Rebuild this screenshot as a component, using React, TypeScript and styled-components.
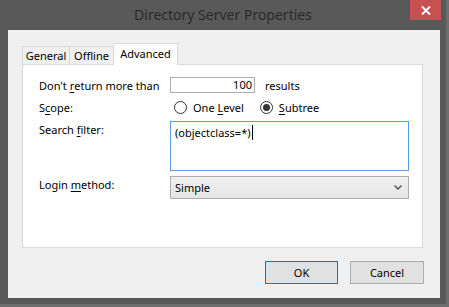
import React from "react";
import styled, { createGlobalStyle } from "styled-components";

const GlobalStyle = createGlobalStyle`
	html, body {
		margin: 0;
		padding: 0;
		background: #6e6e6e;
	}
	body {
		font-family: "Noto Sans", "Open Sans", sans-serif;
		font-size: 11px;
		color: #000;
	}
`;

const Underline = styled.span`
	text-decoration: underline;
	text-underline-offset: 2px;
`;

const Window = styled.div`
	width: 446px;
	height: 304px;
	background: #595959;
	display: flex;
	flex-direction: column;
	box-sizing: border-box;
	padding: 0 6px 6px 8px;
`;

const TitleBar = styled.div`
	height: 30px;
	display: flex;
	align-items: flex-start;
	justify-content: center;
	position: relative;
	margin-left: -8px;
	margin-right: -6px;
`;

const Title = styled.div`
	font-size: 14px;
	color: #2b2b2b;
	line-height: 30px;
`;

const CloseButton = styled.div`
	position: absolute;
	top: 0;
	left: 410px;
	width: 31px;
	height: 20px;
	background: #c75050;
	display: flex;
	align-items: center;
	justify-content: center;
`;

const Client = styled.div`
	flex: 1;
	background: #f0f0f0;
	display: flex;
	flex-direction: column;
	padding: 13px 17px 0 14px;
`;

const TabStrip = styled.div`
	display: flex;
	align-items: flex-end;
	height: 22px;
	position: relative;
	z-index: 1;
	margin-bottom: -1px;
`;

const Tab = styled.div<{ $active?: boolean; $width: number }>`
	box-sizing: border-box;
	width: ${({ $width }) => $width}px;
	height: ${({ $active }) => ($active ? "22px" : "19px")};
	margin-left: -1px;
	border: 1px solid #d9d9d9;
	border-bottom: ${({ $active }) => ($active ? "none" : "1px solid #d9d9d9")};
	background: ${({ $active }) => ($active ? "#fff" : "#f0f0f0")};
	display: flex;
	justify-content: center;
	align-items: ${({ $active }) => ($active ? "flex-start" : "center")};
	padding-top: ${({ $active }) => ($active ? "2px" : "0")};
	&:first-child {
		margin-left: 0;
	}
`;

const Panel = styled.div`
	box-sizing: border-box;
	height: 184px;
	background: #fff;
	border: 1px solid #d9d9d9;
	padding: 12px 14px 0 16px;
	display: grid;
	grid-template-columns: 131px 1fr;
	grid-template-rows: 16px 18px 50px 23px;
	row-gap: 5px;
	align-content: start;
`;

const Label = styled.div<{ $top?: boolean }>`
	display: flex;
	align-items: ${({ $top }) => ($top ? "flex-start" : "center")};
	padding-top: ${({ $top }) => ($top ? "1px" : "0")};
	white-space: nowrap;
`;

const Field = styled.div`
	display: flex;
	align-items: center;
	gap: 10px;
`;

const NumberBox = styled.div`
	box-sizing: border-box;
	width: 85px;
	height: 16px;
	border: 1px solid #abadb3;
	text-align: right;
	line-height: 14px;
	padding-right: 2px;
`;

const RadioGroup = styled.div`
	display: flex;
	align-items: center;
	gap: 16px;
	padding-left: 4px;
`;

const RadioOption = styled.label`
	display: flex;
	align-items: center;
	gap: 6px;
`;

const RadioCircle = styled.span<{ $checked?: boolean }>`
	box-sizing: border-box;
	width: 13px;
	height: 13px;
	border-radius: 50%;
	border: 1px solid #333;
	background: #fff;
	display: flex;
	align-items: center;
	justify-content: center;
	&::after {
		content: "";
		width: 7px;
		height: 7px;
		border-radius: 50%;
		background: ${({ $checked }) => ($checked ? "#333" : "transparent")};
	}
`;

const TextArea = styled.div`
	box-sizing: border-box;
	width: 239px;
	height: 50px;
	border: 1px solid #569de5;
	padding: 3px 4px;
	line-height: 15px;
	display: flex;
	align-items: flex-start;
`;

const Caret = styled.span`
	display: inline-block;
	width: 1px;
	height: 15px;
	background: #000;
	margin-left: 1px;
`;

const Select = styled.div`
	box-sizing: border-box;
	width: 239px;
	height: 23px;
	border: 1px solid #acacac;
	background: linear-gradient(#f0f0f0, #e5e5e5);
	display: flex;
	align-items: center;
	justify-content: space-between;
	padding: 0 6px 0 4px;
`;

const ButtonRow = styled.div`
	display: flex;
	justify-content: flex-end;
	gap: 12px;
	margin-top: 13px;
	margin-right: -1px;
`;

const Button = styled.div<{ $default?: boolean }>`
	box-sizing: border-box;
	width: ${({ $default }) => ($default ? "73px" : "74px")};
	height: 23px;
	background: #e1e1e1;
	border: 1px solid ${({ $default }) => ($default ? "#0078d7" : "#adadad")};
	display: flex;
	align-items: center;
	justify-content: center;
`;

export default function App() {
	return (
		<>
			<GlobalStyle />
			<Window>
				<TitleBar>
					<Title>Directory Server Properties</Title>
					<CloseButton>
						<svg width="10" height="9" viewBox="0 0 10 9">
							<path d="M1 0.5 L9 8.5 M9 0.5 L1 8.5" stroke="#fff" strokeWidth="2" />
						</svg>
					</CloseButton>
				</TitleBar>
				<Client>
					<TabStrip>
						<Tab $width={48}>General</Tab>
						<Tab $width={45}>Offline</Tab>
						<Tab $width={65} $active>Advanced</Tab>
					</TabStrip>
					<Panel>
						<Label>
							Don't&nbsp;<Underline>r</Underline>eturn more than
						</Label>
						<Field>
							<NumberBox>100</NumberBox>
							<span>results</span>
						</Field>
						<Label>
							S<Underline>c</Underline>ope:
						</Label>
						<RadioGroup>
							<RadioOption>
								<RadioCircle />
								<span>
									One <Underline>L</Underline>evel
								</span>
							</RadioOption>
							<RadioOption>
								<RadioCircle $checked />
								<span>
									<Underline>S</Underline>ubtree
								</span>
							</RadioOption>
						</RadioGroup>
						<Label $top>
							Search&nbsp;<Underline>f</Underline>ilter:
						</Label>
						<TextArea>
							(objectclass=*)
							<Caret />
						</TextArea>
						<Label $top>
							Login&nbsp;<Underline>m</Underline>ethod:
						</Label>
						<Select>
							<span>Simple</span>
							<svg width="8" height="5" viewBox="0 0 8 5">
								<path d="M0.5 0.5 L4 4 L7.5 0.5" stroke="#555" strokeWidth="1.5" fill="none" />
							</svg>
						</Select>
					</Panel>
					<ButtonRow>
						<Button $default>OK</Button>
						<Button>Cancel</Button>
					</ButtonRow>
				</Client>
			</Window>
		</>
	);
}
